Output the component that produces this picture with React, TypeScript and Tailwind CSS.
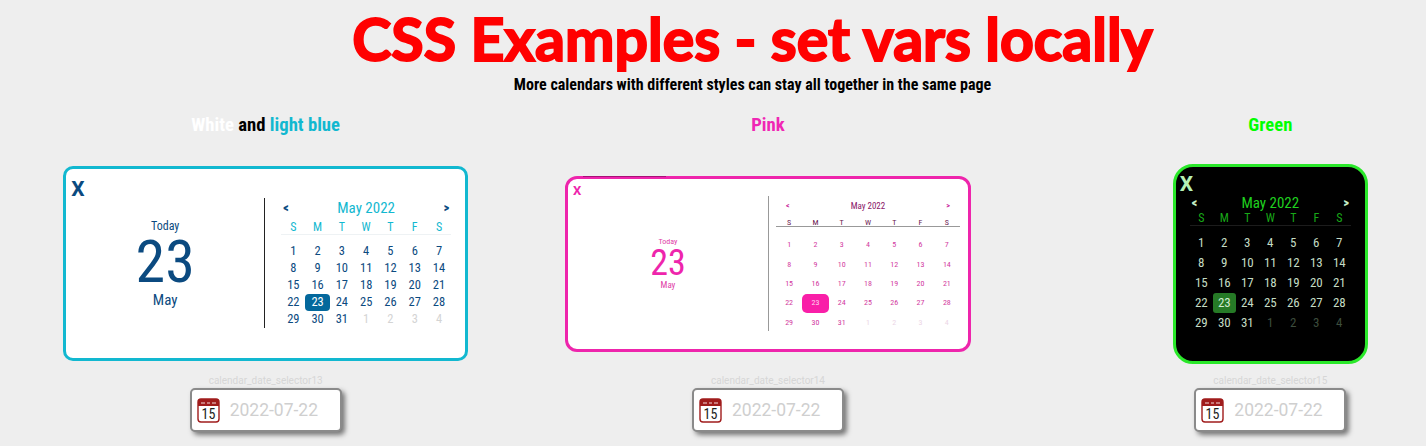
import { Fragment } from 'react'

interface Theme {
  box: string
  closeBtn: string
  mark?: string
  left: string
  today: string
  big: string
  month: string
  right: string
  nav: string
  title: string
  head: string
  week: string
  rule: string
  body: string
  cell: string
  day: string
  muted: string
  selected: string
}

const days = Array.from({ length: 31 }, (_, i) => i + 1)
const weekDays = ['S', 'M', 'T', 'W', 'T', 'F', 'S']

const blue: Theme = {
  box: 'w-[405px] h-[195px] border-[3px] border-[#12b8d0] rounded-[10px] bg-white',
  closeBtn: 'left-[5px] top-[8px] text-[21px] leading-[24px] font-bold text-[#0b4a80] [font-stretch:100%]',
  left: 'w-[199px] h-[130px] mt-[29px] pt-[2px] border-r border-[#222]',
  today: 'text-[12px] leading-[14px] text-[#0b4a80]',
  big: 'text-[60px] leading-[58px] text-[#0b4a80]',
  month: 'text-[15px] leading-[18px] text-[#0b4a80]',
  right: 'w-[200px] pl-[16px] pr-[14px] pt-[30px]',
  nav: 'text-[12px] font-black text-[#0b4a80]',
  title: 'text-[15px] leading-[18px] text-[#12b8d0]',
  head: 'px-[2px] h-[18px]',
  week: 'pt-[3px] text-[12px] leading-[14px] text-[#12b8d0]',
  rule: 'border-b border-[#eef2f4] mb-[8px]',
  body: 'auto-rows-[17px]',
  cell: 'text-[12.5px]',
  day: 'text-[#0b4a80]',
  muted: 'text-[#d4d4d4]',
  selected: 'bg-[#04689c] text-white rounded-[4px]',
}

const pink: Theme = {
  box: 'w-[406px] h-[176px] border-[3px] border-[#ee25ac] rounded-[12px] bg-white',
  closeBtn: 'left-[5px] top-[4px] text-[13px] leading-[16px] font-bold text-[#ee25ac] [font-stretch:100%]',
  mark: '-top-[3px] left-[15px] w-[83px] h-px bg-[#a81078]',
  left: 'w-[201px] h-[135px] mt-[17px] pt-[2px] border-r border-[#999]',
  today: 'text-[8px] leading-[10px] text-[#e040a8]',
  big: 'text-[36px] leading-[32px] text-[#ee25ac]',
  month: 'text-[9px] leading-[12px] text-[#e040a8]',
  right: 'w-[199px] pl-[7px] pr-[8px] pt-[20px]',
  nav: 'text-[8px] font-bold text-[#c8209a]',
  title: 'text-[9px] leading-[12px] text-[#8a1668]',
  head: 'px-[10px] h-[14px]',
  week: 'pt-[6px] text-[8px] leading-[7px] text-[#6b2050]',
  rule: 'border-b border-[#999] mb-[9px]',
  body: 'auto-rows-[19.4px]',
  cell: 'text-[8px]',
  day: 'text-[#d23aa0]',
  muted: 'text-[#ecd6e6]',
  selected: 'bg-[#f91fa8] text-[#ffd0ee] rounded-[5px]',
}

const green: Theme = {
  box: 'w-[195px] h-[200px] border-[3px] border-[#2ae82a] rounded-[20px] bg-black',
  closeBtn: 'left-[4px] top-[5px] text-[21px] leading-[24px] font-bold text-[#b6f0b6] [font-stretch:100%]',
  left: 'hidden',
  today: '',
  big: '',
  month: '',
  right: 'w-full pl-[14px] pr-[14px] pt-[27px]',
  nav: 'text-[12px] font-black text-[#c8f0c8]',
  title: 'text-[15px] leading-[18px] text-[#1fd01f]',
  head: 'px-[2px] h-[18px]',
  week: 'text-[12px] leading-[13px] text-[#18a818]',
  rule: 'border-b border-[#1c1c1c] mb-[7px]',
  body: 'auto-rows-[20px]',
  cell: 'text-[13px]',
  day: 'text-[#c4dcc4]',
  muted: 'text-[#3d4d3d]',
  selected: 'bg-[#267a26] text-[#d0ecd0] rounded-[3px]',
}

function Calendar({ t }: { t: Theme }) {
  return (
    <div className={`relative flex ${t.box}`}>
      {t.mark && <div className={`absolute ${t.mark}`} />}
      <span className={`absolute ${t.closeBtn}`}>X</span>
      <div className={`flex flex-col items-center justify-center ${t.left}`}>
        <span className={t.today}>Today</span>
        <span className={t.big}>23</span>
        <span className={t.month}>May</span>
      </div>
      <div className={t.right}>
        <div className={`flex items-center justify-between ${t.head}`}>
          <span className={t.nav}>&lt;</span>
          <span className={t.title}>May 2022</span>
          <span className={t.nav}>&gt;</span>
        </div>
        <div className={`grid grid-cols-7 text-center ${t.week} ${t.rule}`}>
          {weekDays.map((d, i) => (
            <span key={i}>{d}</span>
          ))}
        </div>
        <div className={`grid grid-cols-7 text-center ${t.body} ${t.cell}`}>
          {days.map((d) => (
            <span key={d} className={`flex items-center justify-center ${d === 23 ? t.selected : t.day}`}>
              {d}
            </span>
          ))}
          {[1, 2, 3, 4].map((d) => (
            <span key={d} className={`flex items-center justify-center ${t.muted}`}>
              {d}
            </span>
          ))}
        </div>
      </div>
    </div>
  )
}

function CalendarIcon() {
  return (
    <svg width="23" height="26" viewBox="0 0 23 26" className="shrink-0">
      <rect x="1" y="2" width="21" height="23" rx="3" fill="#fff" stroke="#a01c1c" strokeWidth="1.4" />
      <path d="M1 9V5a3 3 0 0 1 3-3h15a3 3 0 0 1 3 3v4z" fill="#a01c1c" />
      <path d="M4 6h4M10 6h3M15 6h4" stroke="#f4d8d8" strokeWidth="1.2" />
      <text x="11.5" y="21.5" textAnchor="middle" fontSize="14" fill="#222" fontFamily="Roboto, sans-serif">
        15
      </text>
    </svg>
  )
}

function DateInput({ id }: { id: number }) {
  return (
    <Fragment>
      <div className="text-[10px] leading-[12px] text-[#d6d6d6] [font-stretch:100%]">calendar_date_selector{id}</div>
      <div className="mt-px flex h-[44px] w-[152px] items-center gap-[10px] rounded-[5px] border-2 border-[#8a8a8a] bg-white pl-[5px] shadow-[3px_3px_5px_#777]">
        <CalendarIcon />
        <span className="text-[17.5px] text-[#cfcfcf] [font-stretch:100%]">2022-07-22</span>
      </div>
    </Fragment>
  )
}

export default function App() {
  return (
    <div className="h-[446px] w-[1426px] overflow-hidden bg-[#eeeeee]">
      <div className="w-[1505px] font-['Roboto',sans-serif] [font-stretch:75%]">
        <div className="text-center">
          <h1 className="h-[70px] pt-[6px] font-['Lato',sans-serif] text-[59px] leading-[66px] font-bold text-[#ff0000] [-webkit-text-stroke:2px_#ff0000]">
            CSS Examples - set vars locally
          </h1>
          <p className="mt-[5px] text-[16px] leading-[20px] font-bold text-black">
            More calendars with different styles can stay all together in the same page
          </p>
        </div>
        <div className="mt-[19px] ml-[14.5px] grid w-[1507px] grid-cols-3">
          <div className="flex flex-col items-center">
            <h2 className="text-[18.7px] leading-[22px] font-bold text-black">
              <span className="text-white">White</span> and <span className="text-[#12b8d0]">light blue</span>
            </h2>
            <div className="flex h-[239px] items-center pt-[16px]">
              <Calendar t={blue} />
            </div>
            <DateInput id={13} />
          </div>
          <div className="flex flex-col items-center">
            <h2 className="text-[18.7px] leading-[22px] font-bold text-[#f026b4]">Pink</h2>
            <div className="flex h-[239px] items-center pt-[16px]">
              <Calendar t={pink} />
            </div>
            <DateInput id={14} />
          </div>
          <div className="flex flex-col items-center">
            <h2 className="text-[18.7px] leading-[22px] font-bold text-[#00ff00]">Green</h2>
            <div className="flex h-[239px] items-center pt-[16px]">
              <Calendar t={green} />
            </div>
            <DateInput id={15} />
          </div>
        </div>
      </div>
    </div>
  )
}
